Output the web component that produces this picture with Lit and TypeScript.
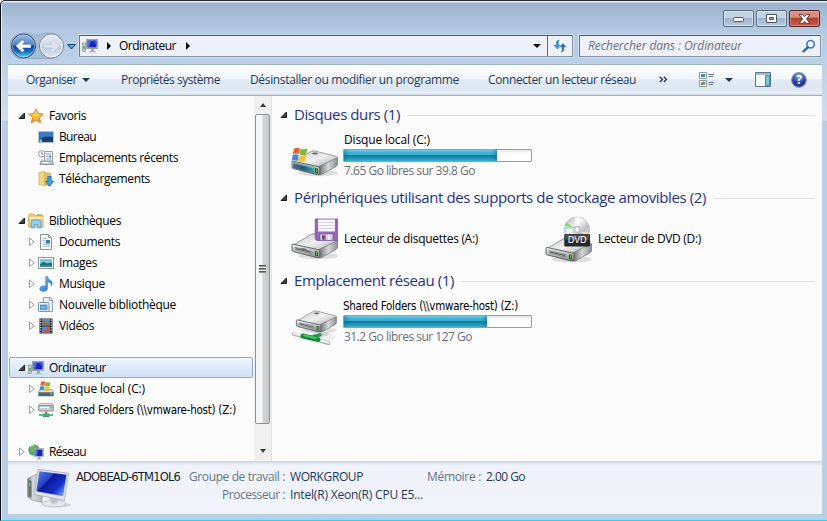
import { LitElement, html, svg, css, TemplateResult } from "lit";
import { customElement, property } from "lit/decorators.js";

/** A single line of text whose tracking is adjusted so it fills an exact width. */
@customElement("fit-text")
class FitText extends LitElement {
  @property() text = "";
  @property({ type: Number }) w = 0;
  static styles = css`
    :host { display: inline-block; white-space: pre; flex: none; }
    .t { display: inline-block; }
  `;
  render() {
    return html`<span class="t">${this.text}</span>`;
  }
  updated() {
    const t = this.renderRoot.querySelector<HTMLElement>(".t")!;
    t.style.letterSpacing = "0px";
    const natural = t.getBoundingClientRect().width;
    t.style.letterSpacing = `${(this.w - natural) / this.text.length}px`;
    this.style.width = `${this.w}px`;
  }
}

const small = (body: unknown, w = 16, h = 16) =>
  html`<svg class="ico" width=${w} height=${h} viewBox="0 0 ${w} ${h}">${body}</svg>`;

const flag = (x: number, y: number, s: number) => svg`<g transform="translate(${x} ${y}) scale(${s})">
  <path d="M2 1.3Q5 -.4 7.6 1L6.7 6.3Q4 5.2 1 6.5z" fill="#e5602a"/>
  <path d="M8.2 1.4Q11.5 2.6 14.6 1.2L13.6 6.6Q10.8 8 7.3 6.7z" fill="#7cb83a"/>
  <path d="M.8 7.2Q3.6 6 6.5 7L5.6 12.6Q3 11.5 0 12.7z" fill="#3f8fd8"/>
  <path d="M7.2 7.4Q10.5 8.7 13.4 7.4L12.4 13Q9.6 14.4 6.3 13z" fill="#f6c02c"/></g>`;

const pcSmall = svg`
  <rect x=".5" y="5" width="3" height="8.5" fill="#c9cccf" stroke="#8b9095" stroke-width=".7"/><path d="M1.2 8h1.6v3H1.2z" fill="#3fb54a"/>
  <rect x="4.5" y="1.5" width="11" height="9" fill="#d9dde0" stroke="#9aa0a5"/><rect x="5.5" y="2.5" width="9" height="7" fill="#1526bf"/>
  <path d="M5.5 2.5H9L7 9.5H5.5z" fill="#5069e6"/><path d="M11 2.5h3.5v5z" fill="#3550dc"/>
  <path d="M9 11h3v2H9z" fill="#a3a8ac"/><path d="M7 13h7v1.3H7z" fill="#b5babd"/>`;

const icons: Record<string, TemplateResult> = {
  pc: small(pcSmall),
  star: small(svg`<defs><linearGradient id="st" x2="0" y2="1"><stop stop-color="#fff3b0"/><stop offset=".5" stop-color="#fdc43e"/><stop offset="1" stop-color="#f2932a"/></linearGradient></defs>
    <path d="M8 .8 10.1 5.6 15.3 6.1 11.4 9.5 12.6 14.8 8 12 3.4 14.8 4.6 9.5.7 6.1 5.9 5.6z" fill="url(#st)" stroke="#dc7f26" stroke-linejoin="round"/>`),
  desk: small(svg`<rect x=".5" y="2.5" width="15" height="11" fill="#2a5ba5" stroke="#b9c2cc"/><path d="M1 3h14v6Q6 5 1 11z" fill="#3b79c4"/><path d="M1 11q8-5 14-3v5H1z" fill="#183c78"/><path d="M1 11.7h14V13H1z" fill="#2c3c54"/><circle cx="2.8" cy="11.8" r="1.5" fill="#6cc4ee"/>`),
  recent: small(svg`<path d="M6.5 1.5h8v10h-8z" fill="#f4f7fa" stroke="#97a1aa"/><path d="M8 4h5M8 6.5h2.5M8 9h5" stroke="#8ba4bd"/><rect x="11" y="5.5" width="2" height="2" fill="#4591c6"/><path d="M3 11h11.5l1 3.5H2z" fill="#c3c9ce" stroke="#8b9298"/><path d="M4.5 12.7h6" stroke="#fff"/><circle cx="3.8" cy="3.8" r="3.2" fill="#f6f8fa" stroke="#919aa2"/><path d="M3.8 2v2.2h1.6" stroke="#5c6873" fill="none" stroke-width=".8"/>`),
  down: small(svg`<path d="M1 1.5 7 .5v14l-6-1z" fill="#f2d57d" stroke="#cfa94c" stroke-width=".7"/><path d="M7 2h5.5v12H7z" fill="#e8c262" stroke="#c9a550" stroke-width=".7"/><path d="M9.8 5.5h3.4v4.8h2.4L11.5 15.4 7.4 10.3h2.4z" fill="#3f9ce4" stroke="#1b69b3" stroke-width=".8"/>`),
  lib: small(svg`<path d="M.5 2.5 1.5 1h4.5l1 1.5h8v11.5H.5z" fill="#ecd078" stroke="#c5a850" stroke-width=".8"/><path d="M1 4h14.2v2H1z" fill="#fbedb5"/><path d="M9 1.9h5" stroke="#77b85a"/><path d="M3.2 15V9.5Q3.2 6.8 5.5 6.8h5Q12.8 6.8 12.8 9.5V15h-3v-3.3H6.2V15z" fill="#90cdf0" stroke="#4f99cc" stroke-width=".8"/>`),
  doc: small(svg`<path d="M2.5.5h8l3 3v12h-11z" fill="#f9fbfc" stroke="#8b949b"/><path d="M10.5.5v3h3" fill="#dde3e8" stroke="#8b949b"/><path d="M4.5 4.5h4M4.5 6.5h3M4.5 8.5h3M4.5 10.5h7M4.5 12.5h7" stroke="#9aabb9" stroke-width=".8"/><rect x="8" y="6" width="4" height="3.5" fill="#2e7dad"/>`),
  img: small(svg`<rect x=".5" y="2.5" width="15" height="11" fill="#fff" stroke="#8f979e"/><rect x="2" y="4" width="12" height="8" fill="#7ec4e6"/><path d="M2 9.3 5.5 6.8 9 8.5l5-1V12H2z" fill="#2a6f5b"/><path d="M2 10h12v2H2z" fill="#2c8ba2"/>`),
  music: small(svg`<defs><linearGradient id="mu" x2="1" y2="1"><stop stop-color="#7fcdf7"/><stop offset="1" stop-color="#1763bc"/></linearGradient></defs><path d="M7.7.5h1.9Q10 3.1 12.5 4.3q3 1.9.7 6Q13.7 6.4 9.6 6v6q0 3.3-4 3.5-3.9 0-3.9-2.7Q2 9.7 5.7 9.8q1.3 0 2 .4z" fill="url(#mu)" stroke="#3b86c8" stroke-width=".5"/>`),
  nlib: small(svg`<path d="M5.5.5h6.8l2.2 2.4v11.6h-9z" fill="#edf2f6" stroke="#8fa1b0"/><path d="M11.5.5v3h3" fill="none" stroke="#8fa1b0"/><rect x=".5" y="5.5" width="10.5" height="9" rx="1" fill="#e8f2fa" stroke="#7891a7"/><rect x="2.5" y="8" width="6.5" height="4.5" fill="#68b1ea" stroke="#387bb7" stroke-width=".7"/>`),
  video: small(svg`<path d="M1.5.5h13v15h-13z" fill="#292d31"/><path d="M4 1h8v6.4H4zM4 8.5h8v6.5H4z" fill="#4b91c8"/><path d="M4 3q2-2 4 1t4-2v3.5L9 7.4H6zM5 15q0-4 3-4.5L12 9v4l-2 2z" fill="#b56049"/><path d="M2.7 1.5v13M13.3 1.5v13" stroke="#e9ebec" stroke-width="1.1" stroke-dasharray="1.3 1.2"/>`),
  drive: small(svg`<path d="M2 8.5h12l1.5 2.5v4H.5v-4z" fill="#dfe2e4" stroke="#888f94" stroke-width=".7"/><path d="M.8 11h14.4v4H.8z" fill="#4d626d"/><path d="M1 11.6h13.8" stroke="#87a0aa" stroke-width=".7"/><path d="M12.5 12h1.3v2h-1.3z" fill="#69dc52"/>${flag(1.5, 0, .75)}`),
  net: small(svg`<path d="M2 1.5h12l1.4 2H.6z" fill="#eceeef" stroke="#8c9396" stroke-width=".7"/><rect x=".6" y="3.4" width="14.8" height="5.6" rx="1" fill="#c9cdcf" stroke="#72797d" stroke-width=".8"/><path d="M2 5.5h9" stroke="#f8f8f8"/><path d="M12.5 4.5h1.2v2h-1.2z" fill="#46ad49"/><path d="M7 9.4h2.3v2.6H7z" fill="#828c8f"/><path d="M5 11.5h6.2V15H5z" fill="#2f9d63"/><path d="M1 13h14" stroke="#43b57b" stroke-width="1.8"/>`),
  world: small(svg`<circle cx="6" cy="6" r="5.6" fill="#2f8ad3"/><path d="M2 2.5 6 .6l2 2L5 5l1.3 2L4 10.5 1 7zM8 1l2.7 2-2 2z" fill="#66bd45"/><path d="M2 2.6Q4 1 6 1" stroke="#d4f0ff" fill="none"/><rect x="6.5" y="4.5" width="9" height="8" fill="#dce0e3" stroke="#959ba1" stroke-width=".7"/><path d="M7.5 5.5h7V12h-7z" fill="#1427ba"/><path d="M7.5 5.5H10L9 12H7.5z" fill="#4966e4"/><path d="M10 13h2.4v1.7H10z" fill="#969da1"/><path d="M8.5 15h5.2" stroke="#adb1b4"/>`),
};

const metal = (id: string) => svg`<defs>
  <linearGradient id="${id}t" x2="1" y2="1"><stop stop-color="#c4c6c8"/><stop offset=".5" stop-color="#f0f0f0"/><stop offset="1" stop-color="#a3a5a7"/></linearGradient>
  <linearGradient id="${id}f" x2="0" y2="1"><stop stop-color="#f6f6f6"/><stop offset="1" stop-color="#85878a"/></linearGradient>
  <linearGradient id="${id}s" x2="1" y2="0"><stop stop-color="#6d6f71"/><stop offset=".5" stop-color="#d6d7d8"/><stop offset="1" stop-color="#8c8e90"/></linearGradient>
  <linearGradient id="${id}b" x2="1" y2="0"><stop stop-color="#4d7482"/><stop offset=".5" stop-color="#1d5876"/><stop offset="1" stop-color="#39a6a8"/></linearGradient></defs>`;
/* External-drive body: lid, front panel, right flank and green LED. */
const body = (id: string, front: unknown) => svg`${metal(id)}
  <ellipse cx="27" cy="42" rx="20" ry="3.3" fill="#000" opacity=".12"/>
  <path d="M1.5 31.5 20 20.5Q22 19.5 24 20L45.5 25.5Q47 26.3 46 27.6L28 36.5 2 33z" fill="url(#${id}t)" stroke="#75787a" stroke-width=".7"/>
  <path d="M28 35.5 46.5 26.5v6.5Q46.5 34.5 45 35.5L30.5 43.5 28 43.8z" fill="url(#${id}s)" stroke="#606365" stroke-width=".6"/>
  <path d="M1.5 30Q1 30 1 31.5v4.7q0 1 1.3 1.4L26.5 43.8q2.3.2 2.3-1.6v-5.2q0-1-1.5-1.3z" fill="url(#${id}f)" stroke="#55585a" stroke-width=".9"/>
  ${front}<path d="M24 37l3 .7v4.6l-3-.7z" fill="#244e1e"/><path d="M25 38l1.2.3v3l-1.2-.3z" fill="#56dc3b"/>`;
const slot = svg`<path d="M4 33.3 21 37.3v2.5L4 35.7z" fill="#c4c6c8" stroke="#6d7072" stroke-width=".6"/><path d="M5 34.7 20 38.3" stroke="#333" stroke-width=".8"/>`;

const big: Record<string, TemplateResult> = {
  hdd: html`<svg class="big" width="48" height="48" viewBox="0 0 48 48">${body("h", svg`<path d="M2 31 23.5 36.3v6L2 37z" fill="url(#hb)"/><path d="M2 31 23.5 36.3v1.5L2 32.5z" fill="#a5c3c9" opacity=".6"/>`)}<ellipse cx="24" cy="22.6" rx="3" ry="1" fill="#65686a"/>${flag(.8, 16.3, 1.06)}</svg>`,
  floppy: html`<svg class="big" width="48" height="48" viewBox="0 0 48 48">${body("f", svg`${slot}<path d="M9 35q4-2.5 8 1.8" fill="#686b6d"/>`)}
    <path d="M24.2 5h22.3v21.5H25.7L24.2 25z" fill="#9566b8" stroke="#78499b" stroke-width=".7"/><path d="M27 5.5h17v12H27z" fill="#f9f8fb"/><path d="M27 8.5h17M27 11.5h17M27 14.5h17" stroke="#cdc9d4" stroke-width=".8"/><path d="M29 20h13v6.3H29z" fill="#d7d3dc" stroke="#74508f" stroke-width=".6"/><path d="M31 21.2h3.5v4.5H31z" fill="#70488c"/><path d="M37 20.5h2v5.5h-2z" fill="#fff" opacity=".7"/></svg>`,
  dvd: html`<svg class="big" width="48" height="48" viewBox="0 0 48 48"><g transform="translate(0 3.3)">${body("d", slot)}</g>
    <defs><linearGradient id="disc" x2="1" y2="1"><stop stop-color="#aaa"/><stop offset=".4" stop-color="#f8f8f8"/><stop offset=".65" stop-color="#bdbdbd"/><stop offset="1" stop-color="#eee"/></linearGradient></defs>
    <circle cx="32" cy="15.5" r="12.5" fill="url(#disc)" stroke="#a1a3a4" stroke-width=".6"/><path d="M30 14.5 19.8 11.5 21 8.5z" fill="#7dd94d"/><path d="M30 14.5 19.5 15l.3-3.5z" fill="#b2dfe0"/><path d="m34 17 10.4 2-1.7 3z" fill="#f1e3a5"/><path d="M29 3.3 35 3l-2.5 10z" fill="#fff" opacity=".7"/>
    <circle cx="32" cy="15.5" r="3.4" fill="#d6d6d6" stroke="#a4a4a4" stroke-width=".6"/><circle cx="32" cy="15.5" r="1.4" fill="#fff"/>
    <rect x="19.3" y="20" width="25.7" height="12.5" rx="1" fill="#242628"/><path d="M19.6 20.3h25v5.5h-25z" fill="#4a4c4d"/><text x="32.2" y="29.3" text-anchor="middle" textLength="19" lengthAdjust="spacingAndGlyphs" font-size="8.5" font-family="DejaVu Sans" fill="#fff">DVD</text></svg>`,
  netdrive: html`<svg class="big" width="48" height="48" viewBox="0 0 48 48"><ellipse cx="30" cy="40" rx="14" ry="5" fill="#000" opacity=".06"/><g transform="translate(4.5 -3.6) scale(.88)">${body("n", slot)}<ellipse cx="24" cy="22.6" rx="3" ry="1" fill="#65686a"/></g>
    <path d="M3 37 11 39M30 44.2l7.5 2" stroke="#a5a9ab" stroke-width="3.8" stroke-linecap="round"/><path d="M3 36.5 11 38.5M30 43.7l7.5 2" stroke="#eceeef" stroke-width="2.4" stroke-linecap="round"/>
    <path d="M21 40 36 37" stroke="#c8ccce" stroke-width="3" stroke-linecap="round"/>
    <path d="M12 39 27 42.6" stroke="#148a3c" stroke-width="5" stroke-linecap="round"/><path d="M21 40 29 37.8" stroke="#1c9e47" stroke-width="3.4" stroke-linecap="round"/><path d="M13 38.3 25 41.2" stroke="#4cc86e" stroke-width="1.7" stroke-linecap="round"/></svg>`,
  computer: html`<svg class="big" width="48" height="48" viewBox="0 0 48 48"><defs><linearGradient id="scr" x2="1" y2=".8"><stop stop-color="#5d80e8"/><stop offset=".4" stop-color="#2442c6"/><stop offset=".42" stop-color="#0a189c"/><stop offset=".75" stop-color="#1430c8"/><stop offset="1" stop-color="#6f9af2"/></linearGradient><linearGradient id="tw" x2="1"><stop stop-color="#777b7e"/><stop offset=".35" stop-color="#d4d7d9"/><stop offset="1" stop-color="#b5b9bc"/></linearGradient></defs>
    <ellipse cx="31" cy="41" rx="14" ry="2.5" fill="#000" opacity=".12"/>
    <path d="M1.5 14.5 10 10.5l6 1v27L6 36 1.5 33z" fill="url(#tw)" stroke="#8b9094" stroke-width=".6"/><path d="M2.6 15.5 5.5 17v16.5L2.6 32z" fill="#6b6f72"/><path d="M3 18.7l1.5.7v3l-1.5-.7z" fill="#53d34b"/>
    <ellipse cx="28" cy="39.6" rx="12" ry="3.3" fill="#e5e8ea" stroke="#abb0b4" stroke-width=".6"/><path d="M23 33h9l-1 6.5h-6z" fill="#bfc4c8"/>
    <path d="M12 5.3 42.5 9.3 38.5 36.5 8.5 30.5z" fill="#e2e5e8" stroke="#9ca3aa" stroke-width=".7"/><path d="M13.4 7.2 40.5 10.8 37 32.3 10.4 27.3z" fill="url(#scr)"/></svg>`,
};

@customElement("app-root")
class AppRoot extends LitElement {
  static styles = css`
    :host { display: block; width: 827px; height: 521px; overflow: hidden; font: 12px/16px "Open Sans", "Noto Sans", sans-serif; color: #000; }
    * { box-sizing: border-box; }
    svg { display: block; flex: none; }
    .window { height: 521px; display: flex; flex-direction: column; padding: 0 5px 6px 7px; border-left: 1px solid #0b0c10; border-top: 1px solid #2b2a31; border-bottom: 1px solid #35d0e2;
      background: linear-gradient(#e3edf7 0 1px, #9eb4ce 2px, #b4cae3 30px, #bad0e9 55px, #cddeef 119px, #b9cfe8 120px, #b9cfe8 100%); box-shadow: inset 1px 0 #e9f2fa; border-top-left-radius: 5px; }
    .title { height: 34px; flex: none; display: flex; justify-content: flex-end; gap: 2px; padding: 9px 2px 0 0; }
    .wb { width: 31px; height: 17px; border: 1px solid #5c6c80; border-radius: 2px; box-shadow: inset 0 0 0 1px #e2ebf5b0; background: linear-gradient(#c4d3e4 45%, #9eb3cb 50%, #b8cbe0); display: flex; align-items: center; justify-content: center; }
    .wb.close { border-color: #5c2028; box-shadow: inset 0 0 0 1px #f0b9a980; background: linear-gradient(#d68f80 40%, #b03f30 50%, #c1614b); }
    .nav { height: 22px; flex: none; display: flex; margin: 0 1px 0 2px; }
    .arrows { width: 69px; height: 28px; margin-top: -3px; }
    .box { height: 22px; background: #eef2f8; border: 1px solid #8794a5; border-top-color: #4f5965; border-left-color: #6e7987; box-shadow: 0 0 0 1px #cfdff0; display: flex; align-items: center; }
    .addr { width: 494px; padding-left: 2px; }
    .addr .name { margin: 0 10px 0 8px; }
    .grow { flex: 1; }
    .refresh { width: 25px; height: 20px; border-left: 1px solid #5d6875; margin-left: 6px; display: flex; align-items: center; justify-content: center; }
    .search { width: 242px; margin-left: 6px; padding: 0 4px 0 8px; justify-content: space-between; font-style: italic; color: #6c6f75; }
    .tools { height: 32px; margin-top: 7px; flex: none; display: flex; align-items: center; padding: 0 15px 1px 18px; color: #1e395b; border-top: 1px solid #9fb4cb; border-bottom: 1px solid #9db0c8; background: linear-gradient(#fff 0, #f3f7fc 45%, #e2eaf4 50%, #dce7f3 88%, #eaf2fa 92%, #cfdcea); }
    .tri { width: 0; border: 4px solid transparent; border-top-color: currentColor; border-bottom: 0; }
    .tri.r { border: 4px solid transparent; border-left: 4.5px solid #000; border-right: 0; }
    .panes { height: 365px; flex: none; display: flex; background: #fcfcfd; }
    .tree { width: 245px; padding: 9px 0 0 1px; overflow: hidden; }
    .row { height: 21px; width: 244px; display: flex; align-items: center; padding-left: 9px; border: 1px solid transparent; border-left: 0; }
    .row.child { padding-left: 19px; }
    .row.sel { border: 1px solid #84acdd; padding-left: 8px; border-radius: 2px; background: linear-gradient(#edf5fd, #cfe2f8); }
    .row .ico { margin: 0 5px 0 2px; }
    .row.child .ico { margin-left: 2px; margin-right: 5px; }
    .gap { height: 21px; }
    .tahoma { font: 11.5px/16px "DejaVu Sans Condensed", "DejaVu Sans", sans-serif; font-stretch: condensed; }
    .z { margin: 1px 0 0 1px; }
    .sb { width: 17px; margin-left: 1px; display: flex; flex-direction: column; align-items: center; background: #f0f0f1; color: #444; padding: 7px 0 6px; }
    .up { width: 0; border: 3.5px solid transparent; border-bottom: 4px solid #3c3c3c; border-top: 0; }
    .sb .tri { border-width: 4px 3.5px 0; border-top-color: #3c3c3c; }
    .thumb { width: 15px; height: 310px; margin: 7px 0 25px; border: 1px solid #8f9194; border-radius: 2px; background: linear-gradient(90deg, #f6f6f6 45%, #d6d7d9 55%, #c4c6c9); display: flex; align-items: center; justify-content: center; }
    .grip { width: 7px; height: 8px; background: repeating-linear-gradient(#55585c 0 1px, #909397 1px 2px, #f8f8f8 2px 3px); }
    .main { flex: 1; border-left: 1px solid #d6e5f5; padding: 9px 7px 0 10px; }
    .group { height: 83px; }
    .head { height: 20px; display: flex; align-items: center; font-size: 15px; line-height: 20px; color: #1e3287; }
    .head .tw { margin: -1px 6px 0 -2px; }
    .head fit-text { margin-top: -2px; }
    .line { flex: 1; height: 1px; background: #e0e1e3; margin-left: 7px; }
    .items { display: flex; padding-left: 9px; }
    .item { width: 254px; display: flex; gap: 4px; }
    .item .big { margin-top: 6px; }
    .single { padding-top: 23px; margin-left: 1px; }
    .info { padding-top: 7px; }
    .info fit-text { margin-left: 1px; display: block; }
    .info .tahoma { margin-left: 0; }
    .bar { width: 189px; height: 13px; margin: 1px 0; padding: 1px; border: 1px solid #9c9d9f; border-radius: 1px; background: #fff; box-shadow: inset 0 2px 2px #e8e8ea; }
    .fill { height: 11px; margin: -1px 0 0 -1px; background: linear-gradient(#8edcf0 0, #45b9d9 18%, #35a9cb 45%, #16799d 50%, #1f8fb3 72%, #3bc4dd 100%); box-shadow: inset 5px 0 5px -3px #0c6e94a0, inset -5px 0 5px -3px #0c6e94a0; }
    .sub { color: #6c6d70; }
    .details { height: 53px; flex: none; display: flex; background: linear-gradient(#cbd9e7 0 1px, #dce5ef 2px, #eff3f9 5px, #f1f5fb); padding-left: 18px; color: #1e395b; line-height: 18px; }
    .details .big { margin-top: 3px; }
    .host { margin: 7px 0 0 2px; color: #1c2126; font: 11.5px/18px "DejaVu Sans", sans-serif; }
    .cols { display: grid; grid-template-columns: 96px 133px 58px auto; column-gap: 5px; margin: 7px 0 0 9px; grid-auto-rows: 18px; align-content: start; }
    .lab { color: #647486; justify-self: end; }
    .cols .lab.m { margin-right: 5px; }
    .cols .mem { margin-left: -5px; }
  `;

  private twist(open: boolean) {
    return open
      ? html`<svg class="tw" width="8" height="8" viewBox="0 0 8 8"><path d="M6.5 1v5.5H1z" fill="#404040" stroke="#1d1d1d"/></svg>`
      : html`<svg class="tw" width="8" height="10" viewBox="0 0 8 10"><path d="M1.5 1v7.6L6.3 4.8z" fill="#fff" stroke="#999da1"/></svg>`;
  }
  private row(icon: string, text: string, w: number, o: { child?: boolean; open?: boolean; none?: boolean; sel?: boolean; z?: boolean } = {}) {
    return html`<div class="row ${o.child ? "child" : ""} ${o.sel ? "sel" : ""}">
      ${o.none ? html`<svg width="8" height="8"></svg>` : this.twist(!!o.open)}${icons[icon]}<fit-text class=${o.z ? "z tahoma" : ""} .text=${text} .w=${w}></fit-text></div>`;
  }
  private head(text: string, w: number) {
    return html`<div class="head">${this.twist(true)}<fit-text .text=${text} .w=${w}></fit-text><span class="line"></span></div>`;
  }
  private disk(icon: string, name: string, nw: number, fill: number, sub: string, sw: number, face = "") {
    return html`<div class="items"><div class="item">${big[icon]}<div class="info">
      <fit-text class=${face} .text=${name} .w=${nw}></fit-text><div class="bar"><div class="fill" style="width:${fill}px"></div></div>
      <fit-text class="sub" .text=${sub} .w=${sw}></fit-text></div></div></div>`;
  }

  render() {
    const c = { child: true };
    return html`<div class="window">
      <div class="title">
        <div class="wb"><svg width="13" height="7"><rect x="1.5" y="2.5" width="10" height="4" rx="1" fill="#fff" stroke="#4c5460"/></svg></div>
        <div class="wb"><svg width="11" height="9"><path d="M.5.5h10v8H.5zM3.5 3.5v2h4v-2z" fill="#fff" fill-rule="evenodd" stroke="#4c5460"/></svg></div>
        <div class="wb close"><svg width="13" height="10" viewBox="0 0 13 10"><path d="M1 .6h3.6l1.9 2.1L8.4.6H12L8.5 5 12 9.4H8.4L6.5 7.3 4.6 9.4H1L4.5 5z" fill="#fff" stroke="#5a3c43"/></svg></div>
      </div>
      <div class="nav">
        <svg class="arrows" width="69" height="28" viewBox="0 0 69 28">
          <defs><linearGradient id="bk" x2="0" y2="1"><stop stop-color="#a4c2e8"/><stop offset=".45" stop-color="#4c7fc4"/><stop offset=".5" stop-color="#0e3f91"/><stop offset=".72" stop-color="#1768b9"/><stop offset="1" stop-color="#63e0f8"/></linearGradient>
          <linearGradient id="fw" x2="0" y2="1"><stop stop-color="#e4ebf2"/><stop offset=".48" stop-color="#d2dde8"/><stop offset=".52" stop-color="#bccbda"/><stop offset="1" stop-color="#dfe9f3"/></linearGradient></defs>
          <path d="M13 1Q18 1 22 2.5t6 .5q8-3 13-2 12 2 12 13 0 10-11 12.5H12Q0 25 0 14 0 3 13 1z" fill="#a9bdd2" stroke="#90a6bf" stroke-width=".7"/>
          <circle cx="13.5" cy="14" r="12" fill="url(#bk)" stroke="#30486f"/><circle cx="13.5" cy="14" r="11" fill="none" stroke="#c8e0f6" stroke-opacity=".55"/>
          <path d="M5.6 14 12.3 7.7l2.3 2.3-2.2 2.3H21v3.6h-8.6l2.2 2.2-2.3 2.4z" fill="#fff" stroke="#28508b" stroke-width=".4"/>
          <circle cx="41.5" cy="14" r="12" fill="url(#fw)" stroke="#71829a"/><circle cx="41.5" cy="14" r="11" fill="none" stroke="#f6f9fc" stroke-opacity=".8"/>
          <path d="M49.5 14 42.8 7.7l-2.3 2.3 2.2 2.3H34v3.6h8.7l-2.2 2.2 2.3 2.4z" fill="#dde5ee" stroke="#bac7d5" stroke-width=".7"/>
          <path d="M57.5 12.5h8L61.5 17z" fill="#4ca8e0" stroke="#1c4877"/>
        </svg>
        <div class="box addr">${icons.pc}<span class="tri r" style="margin-left:9px"></span><fit-text class="name" .text=${"Ordinateur"} .w=${57}></fit-text><span class="tri r"></span><span class="grow"></span><span class="tri"></span>
          <span class="refresh"><svg width="14" height="14" viewBox="0 0 14 14"><path d="M6.5.8Q2.4.8 2.7 6H.2l4.3 4.4L8.6 6H5.9Q5.5 3 6.5.8z" fill="#4498da"/><path d="M7.8 13.7q3.9-.4 3.6-5.5h2.4L10 3.9 6.2 8.2h2.5Q9 11.5 7.8 13.7z" fill="#2a6cb7" stroke="#eef2f8" stroke-width=".5"/></svg></span></div>
        <div class="box search"><fit-text .text=${"Rechercher dans : Ordinateur"} .w=${154}></fit-text><svg width="14" height="14" viewBox="0 0 14 14"><circle cx="8.6" cy="5.2" r="3.7" fill="#eef6fd" stroke="#3c80c4" stroke-width="1.7"/><path d="M5.7 8.3 1.6 12.3" stroke="#2c64a4" stroke-width="2.4" stroke-linecap="round"/></svg></div>
      </div>
      <div class="tools">
        <fit-text .text=${"Organiser"} .w=${51}></fit-text><span class="tri" style="margin:0 31px 0 5px"></span>
        <fit-text .text=${"Propriétés système"} .w=${99}></fit-text><fit-text style="margin:0 29px 0 30px" .text=${"Désinstaller ou modifier un programme"} .w=${209}></fit-text>
        <fit-text .text=${"Connecter un lecteur réseau"} .w=${148}></fit-text>
        <svg style="margin-left:23px" width="9" height="7" viewBox="0 0 9 7"><path d="M.8.7 3.5 3.4.8 6.1M4.8.7l2.7 2.7-2.7 2.7" fill="none" stroke="#1e395b" stroke-width="1.4"/></svg><span class="grow"></span>
        <svg width="16" height="16" viewBox="0 0 16 16"><path d="M.5.5h7v6h-7zM.5 8.5h7v6h-7z" fill="#fff" stroke="#8d99a5"/><path d="M2 2h4v3H2z" fill="#3a8c9c"/><path d="M2 10h4v3H2z" fill="#d0a744"/><path d="M2 11.5h2V13H2z" fill="#398145"/><path d="M4 10h2v1.4H4z" fill="#3c65aa"/><path d="M9.5 2.5H15M9.5 4.5H14M9.5 10.5H15M9.5 12.5H14" stroke="#647486"/></svg>
        <span class="tri" style="margin:0 22px 0 10px"></span>
        <svg width="16" height="15" viewBox="0 0 16 15"><path d="M.5.5h15v14H.5z" fill="#fff" stroke="#61738a"/><path d="M1 1h14v2H1z" fill="#a8bbcf"/><path d="M10.5 3.5h4v10h-4z" fill="#79c6df" stroke="#428ba9"/></svg>
        <svg style="margin-left:20px" width="16" height="16" viewBox="0 0 16 16"><defs><radialGradient id="hp" cy=".25"><stop stop-color="#8eafe9"/><stop offset="1" stop-color="#173b9c"/></radialGradient></defs><circle cx="8" cy="8" r="7.3" fill="url(#hp)" stroke="#8a8f9c" stroke-width="1.2"/><text x="8" y="12.4" text-anchor="middle" font-size="12" font-weight="700" font-family="Open Sans" fill="#fff">?</text></svg>
      </div>
      <div class="panes">
        <div class="tree">
          ${this.row("star", "Favoris", 37, { open: true })}${this.row("desk", "Bureau", 37, { child: true, none: true })}${this.row("recent", "Emplacements récents", 119, { child: true, none: true })}${this.row("down", "Téléchargements", 91, { child: true, none: true })}
          <div class="gap"></div>
          ${this.row("lib", "Bibliothèques", 72, { open: true })}${this.row("doc", "Documents", 61, c)}${this.row("img", "Images", 38, c)}${this.row("music", "Musique", 46, c)}${this.row("nlib", "Nouvelle bibliothèque", 117, c)}${this.row("video", "Vidéos", 35, c)}
          <div class="gap"></div>
          ${this.row("pc", "Ordinateur", 57, { open: true, sel: true })}${this.row("drive", "Disque local (C:)", 86, c)}${this.row("net", "Shared Folders (\\\\vmware-host) (Z:)", 176, { child: true, z: true })}
          <div class="gap"></div>
          ${this.row("world", "Réseau", 37)}
        </div>
        <div class="sb"><span class="up"></span><div class="thumb"><span class="grip"></span></div><span class="tri"></span></div>
        <div class="main">
          <div class="group">${this.head("Disques durs (1)", 106)}${this.disk("hdd", "Disque local (C:)", 86, 153, "7.65 Go libres sur 39.8 Go", 131)}</div>
          <div class="group">${this.head("Périphériques utilisant des supports de stockage amovibles (2)", 412)}
            <div class="items"><div class="item">${big.floppy}<fit-text class="single" .text=${"Lecteur de disquettes (A:)"} .w=${134}></fit-text></div>
            <div class="item">${big.dvd}<fit-text class="single" .text=${"Lecteur de DVD (D:)"} .w=${103}></fit-text></div></div></div>
          <div class="group">${this.head("Emplacement réseau (1)", 160)}${this.disk("netdrive", "Shared Folders (\\\\vmware-host) (Z:)", 175, 143, "31.2 Go libres sur 127 Go", 128, "tahoma")}</div>
        </div>
      </div>
      <div class="details">${big.computer}<fit-text class="host" .text=${"ADOBEAD-6TM1OL6"} .w=${104}></fit-text>
        <div class="cols"><fit-text class="lab" .text=${"Groupe de travail :"} .w=${96}></fit-text><fit-text .text=${"WORKGROUP"} .w=${73}></fit-text><fit-text class="lab m" .text=${"Mémoire :"} .w=${54}></fit-text><fit-text class="mem" .text=${"2.00 Go"} .w=${39}></fit-text>
        <fit-text class="lab" .text=${"Processeur :"} .w=${63}></fit-text><fit-text .text=${"Intel(R) Xeon(R) CPU E5..."} .w=${133}></fit-text></div></div>
    </div>`;
  }
}
